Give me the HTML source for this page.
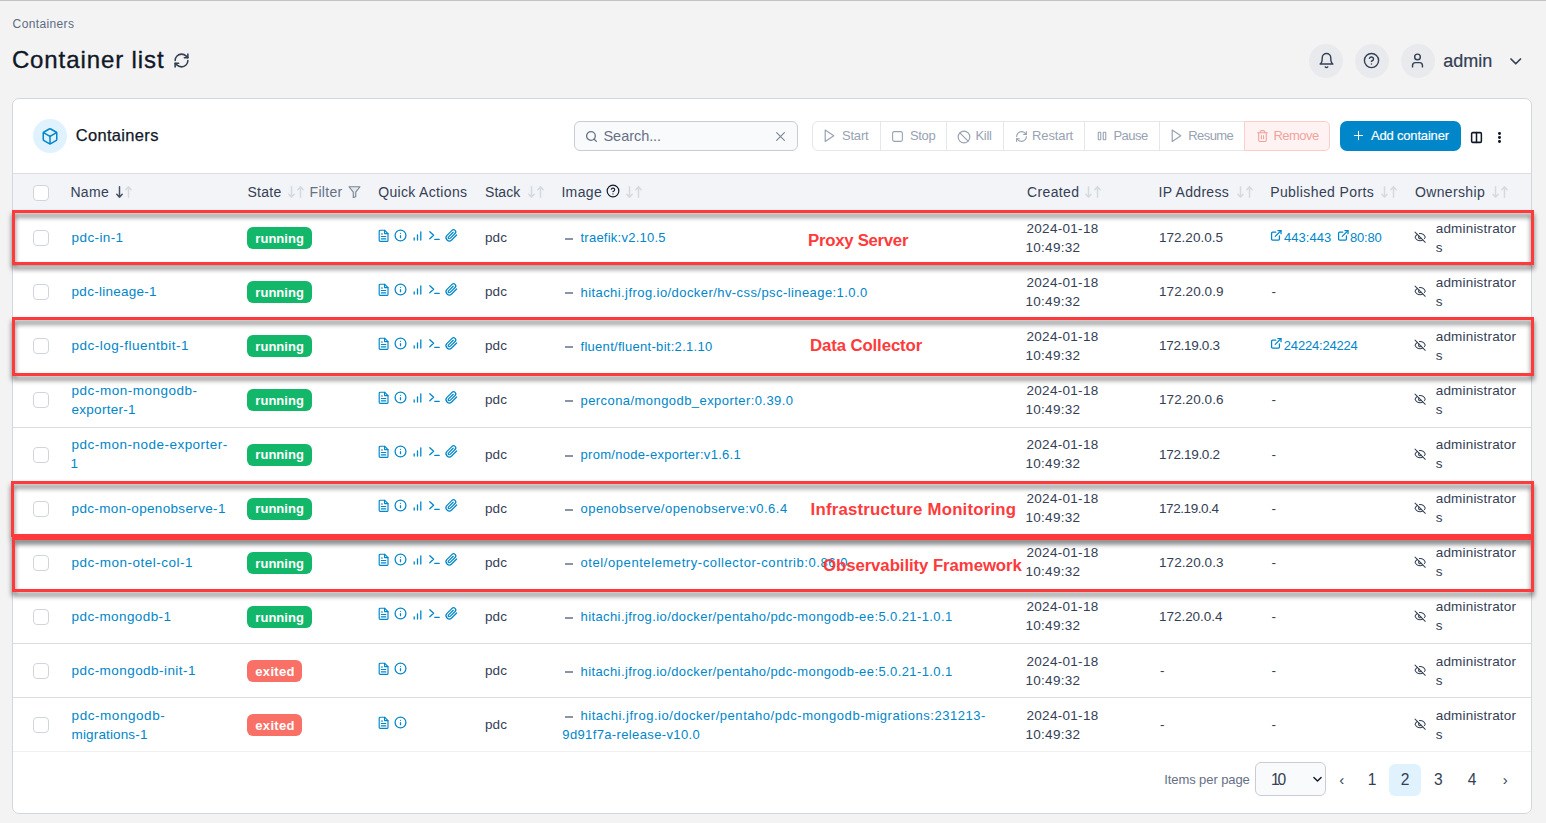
<!DOCTYPE html><html><head><meta charset="utf-8"><style>
html,body{margin:0;padding:0;}
body{width:1546px;height:823px;overflow:hidden;background:#f3f3f3;position:relative;font-family:"Liberation Sans",sans-serif;}
.a{position:absolute;box-sizing:border-box;}
.t{position:absolute;white-space:nowrap;}
svg.a{overflow:visible;}
</style></head><body>
<div class="a" style="left:0px;top:0px;width:1546px;height:1px;background:#c4c4c4;"></div>
<div class="t " style="left:12.60px;top:17.84px;font-size:12px;line-height:12px;color:#5d6b82;letter-spacing:0.374px;">Containers</div>
<div class="t " style="left:11.90px;top:48.28px;font-size:24px;line-height:24px;color:#101828;letter-spacing:0.900px;-webkit-text-stroke:0.35px #101828;">Container list</div>
<svg class="a" style="left:173px;top:51.5px;" width="17" height="17" viewBox="0 0 24 24" fill="none" stroke="#344054" stroke-width="2.2" stroke-linecap="round" stroke-linejoin="round"><path d="M3 12a9 9 0 0 1 9-9 9.75 9.75 0 0 1 6.74 2.74L21 8"/><path d="M21 3v5h-5"/><path d="M21 12a9 9 0 0 1-9 9 9.75 9.75 0 0 1-6.74-2.74L3 16"/><path d="M8 16H3v5"/></svg>
<div class="a" style="left:1309px;top:44px;width:34px;height:34px;border-radius:50%;background:#e8eaee;"></div>
<div class="a" style="left:1355px;top:44px;width:34px;height:34px;border-radius:50%;background:#e8eaee;"></div>
<div class="a" style="left:1401px;top:44px;width:34px;height:34px;border-radius:50%;background:#e8eaee;"></div>
<svg class="a" style="left:1317.5px;top:52px;" width="17" height="17" viewBox="0 0 24 24" fill="none" stroke="#344054" stroke-width="2" stroke-linecap="round" stroke-linejoin="round"><path d="M6 8a6 6 0 0 1 12 0c0 7 3 9 3 9H3s3-2 3-9"/><path d="M10.3 21a1.94 1.94 0 0 0 3.4 0"/></svg>
<svg class="a" style="left:1363px;top:52px;" width="17" height="17" viewBox="0 0 24 24" fill="none" stroke="#344054" stroke-width="2" stroke-linecap="round" stroke-linejoin="round"><circle cx="12" cy="12" r="10"/><path d="M9.09 9a3 3 0 0 1 5.83 1c0 2-3 3-3 3"/><path d="M12 17h.01"/></svg>
<svg class="a" style="left:1409px;top:51.7px;" width="17" height="17" viewBox="0 0 24 24" fill="none" stroke="#344054" stroke-width="2" stroke-linecap="round" stroke-linejoin="round"><path d="M19 21v-2a4 4 0 0 0-4-4H9a4 4 0 0 0-4 4v2"/><circle cx="12" cy="7" r="4"/></svg>
<div class="t " style="left:1443.20px;top:51.76px;font-size:18px;line-height:18px;color:#344054;letter-spacing:-0.004px;-webkit-text-stroke:0.2px #344054;">admin</div>
<svg class="a" style="left:1509.5px;top:57.5px;" width="11.5" height="7.5" viewBox="0 0 11.5 7.5" fill="none" stroke="#344054" stroke-width="1.7" stroke-linecap="round" stroke-linejoin="round"><path d="M1 1l4.75 4.75L10.5 1"/></svg>
<div class="a" style="left:12px;top:98px;width:1520px;height:716px;background:#fff;border:1px solid #d3d8df;border-radius:7px;"></div>
<div class="a" style="left:13px;top:173px;width:1518px;height:1px;background:#dedede;"></div>
<div class="a" style="left:33px;top:119px;width:34px;height:34px;border-radius:50%;background:#e0f2fe;"></div>
<svg class="a" style="left:41px;top:126.6px;" width="18" height="18.6" viewBox="0 0 24 24" fill="none" stroke="#0086c9" stroke-width="2" stroke-linecap="round" stroke-linejoin="round"><path d="M21 16V8a2 2 0 0 0-1-1.73l-7-4a2 2 0 0 0-2 0l-7 4A2 2 0 0 0 3 8v8a2 2 0 0 0 1 1.73l7 4a2 2 0 0 0 2 0l7-4A2 2 0 0 0 21 16z"/><path d="M3.3 7L12 12l8.7-5"/><path d="M12 22V12"/></svg>
<div class="t " style="left:75.70px;top:127.03px;font-size:16.5px;line-height:16.5px;color:#101828;letter-spacing:0.329px;-webkit-text-stroke:0.25px #101828;">Containers</div>
<div class="a" style="left:574px;top:121px;width:224px;height:30px;background:#f9fafb;border:1px solid #c9cdd3;border-radius:6px;"></div>
<svg class="a" style="left:584.7px;top:129.5px;" width="13" height="13" viewBox="0 0 24 24" fill="none" stroke="#667085" stroke-width="2.4" stroke-linecap="round" stroke-linejoin="round"><circle cx="11" cy="11" r="8"/><path d="M21 21l-4.35-4.35"/></svg>
<div class="t " style="left:603.50px;top:128.72px;font-size:14.5px;line-height:14.5px;color:#667085;letter-spacing:-0.050px;">Search...</div>
<svg class="a" style="left:775.5px;top:131.5px;" width="9" height="9" viewBox="0 0 9 9" fill="none" stroke="#7a8494" stroke-width="1.1" stroke-linecap="round" stroke-linejoin="round"><path d="M0.6 0.6l7.8 7.8M8.4 0.6L0.6 8.4"/></svg>
<div class="a" style="left:812px;top:121px;width:433px;height:30px;border:1px solid #e4e7ec;border-radius:6px 0 0 6px;background:#fff;"></div>
<div class="a" style="left:880px;top:121px;width:1px;height:30px;background:#e4e7ec;"></div>
<div class="a" style="left:946px;top:121px;width:1px;height:30px;background:#e4e7ec;"></div>
<div class="a" style="left:1003px;top:121px;width:1px;height:30px;background:#e4e7ec;"></div>
<div class="a" style="left:1084px;top:121px;width:1px;height:30px;background:#e4e7ec;"></div>
<div class="a" style="left:1159px;top:121px;width:1px;height:30px;background:#e4e7ec;"></div>
<div class="a" style="left:1244px;top:121px;width:86px;height:30px;background:#fef3f2;border:1px solid #fecdca;border-radius:0 5px 5px 0;"></div>
<svg class="a" style="left:824.4px;top:129.4px;" width="11" height="13.4" viewBox="0 0 11 13.4" fill="none" stroke="#98a2b3" stroke-width="1.2" stroke-linecap="round" stroke-linejoin="round"><path d="M1.2 1l8.6 5.7-8.6 5.7z"/></svg>
<div class="t " style="left:841.90px;top:128.99px;font-size:13px;line-height:13px;color:#98a2b3;letter-spacing:-0.160px;">Start</div>
<svg class="a" style="left:891px;top:129.5px;" width="13" height="13" viewBox="0 0 24 24" fill="none" stroke="#98a2b3" stroke-width="2" stroke-linecap="round" stroke-linejoin="round"><rect x="3" y="3" width="18" height="18" rx="3"/></svg>
<div class="t " style="left:910.00px;top:128.99px;font-size:13px;line-height:13px;color:#98a2b3;letter-spacing:-0.338px;">Stop</div>
<svg class="a" style="left:956.5px;top:129.5px;" width="14" height="14" viewBox="0 0 24 24" fill="none" stroke="#98a2b3" stroke-width="2" stroke-linecap="round" stroke-linejoin="round"><circle cx="12" cy="12" r="10"/><path d="M4.9 4.9l14.2 14.2"/></svg>
<div class="t " style="left:975.40px;top:128.99px;font-size:13px;line-height:13px;color:#98a2b3;letter-spacing:-0.282px;">Kill</div>
<svg class="a" style="left:1014.5px;top:129.5px;" width="13" height="13" viewBox="0 0 24 24" fill="none" stroke="#98a2b3" stroke-width="2" stroke-linecap="round" stroke-linejoin="round"><path d="M3 12a9 9 0 0 1 9-9 9.75 9.75 0 0 1 6.74 2.74L21 8"/><path d="M21 3v5h-5"/><path d="M21 12a9 9 0 0 1-9 9 9.75 9.75 0 0 1-6.74-2.74L3 16"/><path d="M8 16H3v5"/></svg>
<div class="t " style="left:1032.00px;top:128.99px;font-size:13px;line-height:13px;color:#98a2b3;letter-spacing:-0.115px;">Restart</div>
<svg class="a" style="left:1097px;top:130px;" width="10" height="12" viewBox="0 0 24 24" fill="none" stroke="#98a2b3" stroke-width="2.6" stroke-linecap="round" stroke-linejoin="round"><rect x="3" y="3" width="6" height="18" rx="1"/><rect x="15" y="3" width="6" height="18" rx="1"/></svg>
<div class="t " style="left:1113.40px;top:128.99px;font-size:13px;line-height:13px;color:#98a2b3;letter-spacing:-0.508px;">Pause</div>
<svg class="a" style="left:1171.4px;top:129.4px;" width="11" height="13.4" viewBox="0 0 11 13.4" fill="none" stroke="#98a2b3" stroke-width="1.2" stroke-linecap="round" stroke-linejoin="round"><path d="M1.2 1l8.6 5.7-8.6 5.7z"/></svg>
<div class="t " style="left:1188.30px;top:128.99px;font-size:13px;line-height:13px;color:#98a2b3;letter-spacing:-0.595px;">Resume</div>
<svg class="a" style="left:1255.5px;top:129px;" width="13" height="14" viewBox="0 0 24 24" fill="none" stroke="#f0a39d" stroke-width="2" stroke-linecap="round" stroke-linejoin="round"><path d="M3 6h18"/><path d="M19 6v14a2 2 0 0 1-2 2H7a2 2 0 0 1-2-2V6"/><path d="M8 6V4a2 2 0 0 1 2-2h4a2 2 0 0 1 2 2v2"/><path d="M10 11v6M14 11v6"/></svg>
<div class="t " style="left:1273.50px;top:128.99px;font-size:13px;line-height:13px;color:#f0a39d;letter-spacing:-0.555px;">Remove</div>
<div class="a" style="left:1340px;top:121px;width:121px;height:30px;background:#0086c9;border-radius:7px;"></div>
<svg class="a" style="left:1352.5px;top:130px;" width="11" height="11" viewBox="0 0 24 24" fill="none" stroke="#fff" stroke-width="2.2" stroke-linecap="round" stroke-linejoin="round"><path d="M12 3v18M3 12h18"/></svg>
<div class="t " style="left:1371.00px;top:128.99px;font-size:13px;line-height:13px;color:#fff;letter-spacing:-0.183px;-webkit-text-stroke:0.15px #fff;">Add container</div>
<svg class="a" style="left:1469.5px;top:131px;" width="13" height="13" viewBox="0 0 24 24" fill="none" stroke="#101828" stroke-width="2.8" stroke-linecap="round" stroke-linejoin="round"><rect x="3" y="3" width="18" height="18" rx="2"/><path d="M12 3v18"/></svg>
<div class="a" style="left:1498.2px;top:131.79999999999998px;width:2.8px;height:2.8px;border-radius:50%;background:#101828;"></div>
<div class="a" style="left:1498.2px;top:136.0px;width:2.8px;height:2.8px;border-radius:50%;background:#101828;"></div>
<div class="a" style="left:1498.2px;top:140.2px;width:2.8px;height:2.8px;border-radius:50%;background:#101828;"></div>
<div class="a" style="left:13px;top:174px;width:1518px;height:37px;background:#f2f4f7;"></div>
<div class="a" style="left:13px;top:211px;width:1518px;height:1px;background:#dedede;"></div>
<div class="a" style="left:33px;top:185px;width:16px;height:16px;border:1px solid #d0d5dd;border-radius:4px;background:#fff;"></div>
<div class="t " style="left:70.40px;top:185.15px;font-size:14px;line-height:14px;color:#344054;letter-spacing:0.347px;">Name</div>
<svg class="a" style="left:116px;top:186px;" width="7" height="12" viewBox="0 0 7 12" fill="none" stroke="#475467" stroke-width="1.5" stroke-linecap="round" stroke-linejoin="round"><path d="M3.5 0.8v10.4M0.8 8.3l2.7 2.9 2.7-2.9"/></svg>
<svg class="a" style="left:125px;top:186px;" width="7" height="12" viewBox="0 0 7 12" fill="none" stroke="#d5d9e0" stroke-width="1.5" stroke-linecap="round" stroke-linejoin="round"><path d="M3.5 11.2V0.8M0.8 3.7l2.7-2.9 2.7 2.9"/></svg>
<div class="t " style="left:247.40px;top:185.15px;font-size:14px;line-height:14px;color:#344054;letter-spacing:0.299px;">State</div>
<svg class="a" style="left:288.3px;top:186px;" width="7" height="12" viewBox="0 0 7 12" fill="none" stroke="#d5d9e0" stroke-width="1.5" stroke-linecap="round" stroke-linejoin="round"><path d="M3.5 0.8v10.4M0.8 8.3l2.7 2.9 2.7-2.9"/></svg>
<svg class="a" style="left:297.3px;top:186px;" width="7" height="12" viewBox="0 0 7 12" fill="none" stroke="#d5d9e0" stroke-width="1.5" stroke-linecap="round" stroke-linejoin="round"><path d="M3.5 11.2V0.8M0.8 3.7l2.7-2.9 2.7 2.9"/></svg>
<div class="t " style="left:309.50px;top:185.15px;font-size:14px;line-height:14px;color:#667085;letter-spacing:0.330px;">Filter</div>
<svg class="a" style="left:347.5px;top:186px;" width="13" height="12" viewBox="0 0 13 12.5" fill="none" stroke="#7a8494" stroke-width="1.15" stroke-linecap="round" stroke-linejoin="round"><path d="M0.8 0.8h11.4L7.8 6.3v4.9L5.2 12V6.3z" fill="#e4e7ec"/></svg>
<div class="t " style="left:378.20px;top:185.15px;font-size:14px;line-height:14px;color:#344054;letter-spacing:0.335px;">Quick Actions</div>
<div class="t " style="left:485.00px;top:185.15px;font-size:14px;line-height:14px;color:#344054;letter-spacing:0.072px;">Stack</div>
<svg class="a" style="left:527.6px;top:186px;" width="7" height="12" viewBox="0 0 7 12" fill="none" stroke="#d5d9e0" stroke-width="1.5" stroke-linecap="round" stroke-linejoin="round"><path d="M3.5 0.8v10.4M0.8 8.3l2.7 2.9 2.7-2.9"/></svg>
<svg class="a" style="left:536.6px;top:186px;" width="7" height="12" viewBox="0 0 7 12" fill="none" stroke="#d5d9e0" stroke-width="1.5" stroke-linecap="round" stroke-linejoin="round"><path d="M3.5 11.2V0.8M0.8 3.7l2.7-2.9 2.7 2.9"/></svg>
<div class="t " style="left:561.40px;top:185.15px;font-size:14px;line-height:14px;color:#344054;letter-spacing:0.344px;">Image</div>
<svg class="a" style="left:605.5px;top:183.5px;" width="14" height="14" viewBox="0 0 24 24" fill="none" stroke="#101828" stroke-width="2" stroke-linecap="round" stroke-linejoin="round"><circle cx="12" cy="12" r="10"/><path d="M9.09 9a3 3 0 0 1 5.83 1c0 2-3 3-3 3"/><path d="M12 17h.01"/></svg>
<svg class="a" style="left:626.3px;top:186px;" width="7" height="12" viewBox="0 0 7 12" fill="none" stroke="#d5d9e0" stroke-width="1.5" stroke-linecap="round" stroke-linejoin="round"><path d="M3.5 0.8v10.4M0.8 8.3l2.7 2.9 2.7-2.9"/></svg>
<svg class="a" style="left:635.3px;top:186px;" width="7" height="12" viewBox="0 0 7 12" fill="none" stroke="#d5d9e0" stroke-width="1.5" stroke-linecap="round" stroke-linejoin="round"><path d="M3.5 11.2V0.8M0.8 3.7l2.7-2.9 2.7 2.9"/></svg>
<div class="t " style="left:1026.90px;top:185.15px;font-size:14px;line-height:14px;color:#344054;letter-spacing:0.397px;">Created</div>
<svg class="a" style="left:1085.2px;top:186px;" width="7" height="12" viewBox="0 0 7 12" fill="none" stroke="#d5d9e0" stroke-width="1.5" stroke-linecap="round" stroke-linejoin="round"><path d="M3.5 0.8v10.4M0.8 8.3l2.7 2.9 2.7-2.9"/></svg>
<svg class="a" style="left:1094.2px;top:186px;" width="7" height="12" viewBox="0 0 7 12" fill="none" stroke="#d5d9e0" stroke-width="1.5" stroke-linecap="round" stroke-linejoin="round"><path d="M3.5 11.2V0.8M0.8 3.7l2.7-2.9 2.7 2.9"/></svg>
<div class="t " style="left:1158.50px;top:185.15px;font-size:14px;line-height:14px;color:#344054;letter-spacing:0.314px;">IP Address</div>
<svg class="a" style="left:1236.5px;top:186px;" width="7" height="12" viewBox="0 0 7 12" fill="none" stroke="#d5d9e0" stroke-width="1.5" stroke-linecap="round" stroke-linejoin="round"><path d="M3.5 0.8v10.4M0.8 8.3l2.7 2.9 2.7-2.9"/></svg>
<svg class="a" style="left:1245.5px;top:186px;" width="7" height="12" viewBox="0 0 7 12" fill="none" stroke="#d5d9e0" stroke-width="1.5" stroke-linecap="round" stroke-linejoin="round"><path d="M3.5 11.2V0.8M0.8 3.7l2.7-2.9 2.7 2.9"/></svg>
<div class="t " style="left:1270.20px;top:185.15px;font-size:14px;line-height:14px;color:#344054;letter-spacing:0.396px;">Published Ports</div>
<svg class="a" style="left:1380.5px;top:186px;" width="7" height="12" viewBox="0 0 7 12" fill="none" stroke="#d5d9e0" stroke-width="1.5" stroke-linecap="round" stroke-linejoin="round"><path d="M3.5 0.8v10.4M0.8 8.3l2.7 2.9 2.7-2.9"/></svg>
<svg class="a" style="left:1389.5px;top:186px;" width="7" height="12" viewBox="0 0 7 12" fill="none" stroke="#d5d9e0" stroke-width="1.5" stroke-linecap="round" stroke-linejoin="round"><path d="M3.5 11.2V0.8M0.8 3.7l2.7-2.9 2.7 2.9"/></svg>
<div class="t " style="left:1414.90px;top:185.15px;font-size:14px;line-height:14px;color:#344054;letter-spacing:0.371px;">Ownership</div>
<svg class="a" style="left:1491.5px;top:186px;" width="7" height="12" viewBox="0 0 7 12" fill="none" stroke="#d5d9e0" stroke-width="1.5" stroke-linecap="round" stroke-linejoin="round"><path d="M3.5 0.8v10.4M0.8 8.3l2.7 2.9 2.7-2.9"/></svg>
<svg class="a" style="left:1500.5px;top:186px;" width="7" height="12" viewBox="0 0 7 12" fill="none" stroke="#d5d9e0" stroke-width="1.5" stroke-linecap="round" stroke-linejoin="round"><path d="M3.5 11.2V0.8M0.8 3.7l2.7-2.9 2.7 2.9"/></svg>
<div class="a" style="left:33px;top:230.0px;width:16px;height:16px;border:1px solid #d0d5dd;border-radius:4px;background:#fff;"></div>
<div class="t " style="left:71.60px;top:231.07px;font-size:13.5px;line-height:13.5px;color:#0086c9;letter-spacing:0.391px;">pdc-in-1</div>
<div class="a" style="left:247px;top:227.0px;width:65px;height:22px;background:#12b76a;border-radius:6px;"></div>
<div class="t " style="left:255.30px;top:231.79px;font-size:13px;line-height:13px;color:#fff;font-weight:700;letter-spacing:0.044px;">running</div>
<svg class="a" style="left:378px;top:228.5px;" width="11" height="14" viewBox="0 0 11 14" fill="none" stroke="#0086c9" stroke-width="1.15" stroke-linecap="round" stroke-linejoin="round"><path d="M2.2 1.2H6.6L10 4.6V11.4a1 1 0 0 1-1 1H2.2a1 1 0 0 1-1-1V2.2a1 1 0 0 1 1-1z"/><path d="M6.6 1.2v3.4H10"/><path d="M3.3 5h1.2M3.3 7.5h4.5M3.3 9.9h4.5"/></svg>
<svg class="a" style="left:394px;top:228.5px;" width="13" height="13" viewBox="0 0 24 24" fill="none" stroke="#0086c9" stroke-width="2.3" stroke-linecap="round" stroke-linejoin="round"><circle cx="12" cy="12" r="10"/><path d="M12 16v-4M12 8h.01"/></svg>
<svg class="a" style="left:413px;top:230.6px;" width="9" height="10" viewBox="0 0 9 10" fill="none" stroke="#0086c9" stroke-width="1.3" stroke-linecap="round" stroke-linejoin="round"><path d="M1.2 9v-2.2M4.5 9V3.8M7.8 9V0.8"/></svg>
<svg class="a" style="left:429px;top:230.5px;" width="11" height="9" viewBox="0 0 11 9" fill="none" stroke="#0086c9" stroke-width="1.3" stroke-linecap="round" stroke-linejoin="round"><path d="M0.8 0.8l3.8 3.5-3.8 3.5M5.8 8.4h4.4"/></svg>
<svg class="a" style="left:444.5px;top:228.5px;" width="13" height="13" viewBox="0 0 24 24" fill="none" stroke="#0086c9" stroke-width="2.3" stroke-linecap="round" stroke-linejoin="round"><path d="M21.44 11.05l-9.19 9.19a6 6 0 0 1-8.49-8.49l9.19-9.19a4 4 0 0 1 5.66 5.66l-9.2 9.19a2 2 0 0 1-2.83-2.83l8.49-8.48"/></svg>
<div class="t " style="left:484.90px;top:231.07px;font-size:13.5px;line-height:13.5px;color:#344054;letter-spacing:0.192px;">pdc</div>
<div class="a" style="left:565px;top:238.0px;width:8px;height:2px;background:#8a94a6;"></div>
<div class="t " style="left:580.50px;top:231.49px;font-size:13px;line-height:13px;color:#0086c9;letter-spacing:0.241px;">traefik:v2.10.5</div>
<div class="t " style="left:1026.50px;top:221.57px;font-size:13.5px;line-height:13.5px;color:#344054;letter-spacing:0.295px;">2024-01-18</div>
<div class="t " style="left:1025.50px;top:240.57px;font-size:13.5px;line-height:13.5px;color:#344054;letter-spacing:0.280px;">10:49:32</div>
<div class="t " style="left:1159.00px;top:231.07px;font-size:13.5px;line-height:13.5px;color:#344054;letter-spacing:0.022px;">172.20.0.5</div>
<svg class="a" style="left:1269.6px;top:229.2px;" width="12.6" height="12.6" viewBox="0 0 24 24" fill="none" stroke="#0086c9" stroke-width="2.4" stroke-linecap="round" stroke-linejoin="round"><path d="M18 13v6a2 2 0 0 1-2 2H5a2 2 0 0 1-2-2V8a2 2 0 0 1 2-2h6"/><path d="M15 3h6v6"/><path d="M10 14L21 3"/></svg>
<div class="t " style="left:1284.00px;top:230.69px;font-size:13px;line-height:13px;color:#0086c9;letter-spacing:0.056px;">443:443</div>
<svg class="a" style="left:1336.7px;top:229.2px;" width="12.6" height="12.6" viewBox="0 0 24 24" fill="none" stroke="#0086c9" stroke-width="2.4" stroke-linecap="round" stroke-linejoin="round"><path d="M18 13v6a2 2 0 0 1-2 2H5a2 2 0 0 1-2-2V8a2 2 0 0 1 2-2h6"/><path d="M15 3h6v6"/><path d="M10 14L21 3"/></svg>
<div class="t " style="left:1350.10px;top:230.69px;font-size:13px;line-height:13px;color:#0086c9;letter-spacing:-0.250px;">80:80</div>
<svg class="a" style="left:1414px;top:231.0px;" width="12.3" height="12.3" viewBox="0 0 24 24" fill="none" stroke="#344054" stroke-width="2" stroke-linecap="round" stroke-linejoin="round"><path d="M9.88 9.88a3 3 0 1 0 4.24 4.24"/><path d="M10.73 5.08A10.43 10.43 0 0 1 12 5c7 0 10 7 10 7a13.16 13.16 0 0 1-1.67 2.68"/><path d="M6.61 6.61A13.53 13.53 0 0 0 2 12s3 7 10 7a9.74 9.74 0 0 0 5.39-1.61"/><path d="M2 2l20 20"/></svg>
<div class="t " style="left:1435.70px;top:221.57px;font-size:13.5px;line-height:13.5px;color:#344054;letter-spacing:0.189px;">administrator</div>
<div class="t " style="left:1435.70px;top:240.57px;font-size:13.5px;line-height:13.5px;color:#344054;">s</div>
<div class="a" style="left:13px;top:265px;width:1518px;height:1px;background:#dcdcdc;"></div>
<div class="a" style="left:33px;top:284.13px;width:16px;height:16px;border:1px solid #d0d5dd;border-radius:4px;background:#fff;"></div>
<div class="t " style="left:71.60px;top:285.20px;font-size:13.5px;line-height:13.5px;color:#0086c9;letter-spacing:0.259px;">pdc-lineage-1</div>
<div class="a" style="left:247px;top:281.13px;width:65px;height:22px;background:#12b76a;border-radius:6px;"></div>
<div class="t " style="left:255.30px;top:285.92px;font-size:13px;line-height:13px;color:#fff;font-weight:700;letter-spacing:0.044px;">running</div>
<svg class="a" style="left:378px;top:282.63px;" width="11" height="14" viewBox="0 0 11 14" fill="none" stroke="#0086c9" stroke-width="1.15" stroke-linecap="round" stroke-linejoin="round"><path d="M2.2 1.2H6.6L10 4.6V11.4a1 1 0 0 1-1 1H2.2a1 1 0 0 1-1-1V2.2a1 1 0 0 1 1-1z"/><path d="M6.6 1.2v3.4H10"/><path d="M3.3 5h1.2M3.3 7.5h4.5M3.3 9.9h4.5"/></svg>
<svg class="a" style="left:394px;top:282.63px;" width="13" height="13" viewBox="0 0 24 24" fill="none" stroke="#0086c9" stroke-width="2.3" stroke-linecap="round" stroke-linejoin="round"><circle cx="12" cy="12" r="10"/><path d="M12 16v-4M12 8h.01"/></svg>
<svg class="a" style="left:413px;top:284.73px;" width="9" height="10" viewBox="0 0 9 10" fill="none" stroke="#0086c9" stroke-width="1.3" stroke-linecap="round" stroke-linejoin="round"><path d="M1.2 9v-2.2M4.5 9V3.8M7.8 9V0.8"/></svg>
<svg class="a" style="left:429px;top:284.63px;" width="11" height="9" viewBox="0 0 11 9" fill="none" stroke="#0086c9" stroke-width="1.3" stroke-linecap="round" stroke-linejoin="round"><path d="M0.8 0.8l3.8 3.5-3.8 3.5M5.8 8.4h4.4"/></svg>
<svg class="a" style="left:444.5px;top:282.63px;" width="13" height="13" viewBox="0 0 24 24" fill="none" stroke="#0086c9" stroke-width="2.3" stroke-linecap="round" stroke-linejoin="round"><path d="M21.44 11.05l-9.19 9.19a6 6 0 0 1-8.49-8.49l9.19-9.19a4 4 0 0 1 5.66 5.66l-9.2 9.19a2 2 0 0 1-2.83-2.83l8.49-8.48"/></svg>
<div class="t " style="left:484.90px;top:285.20px;font-size:13.5px;line-height:13.5px;color:#344054;letter-spacing:0.192px;">pdc</div>
<div class="a" style="left:565px;top:292.13px;width:8px;height:2px;background:#8a94a6;"></div>
<div class="t " style="left:580.50px;top:285.62px;font-size:13px;line-height:13px;color:#0086c9;letter-spacing:0.428px;">hitachi.jfrog.io/docker/hv-css/psc-lineage:1.0.0</div>
<div class="t " style="left:1026.50px;top:275.70px;font-size:13.5px;line-height:13.5px;color:#344054;letter-spacing:0.295px;">2024-01-18</div>
<div class="t " style="left:1025.50px;top:294.70px;font-size:13.5px;line-height:13.5px;color:#344054;letter-spacing:0.280px;">10:49:32</div>
<div class="t " style="left:1159.00px;top:285.20px;font-size:13.5px;line-height:13.5px;color:#344054;letter-spacing:0.078px;">172.20.0.9</div>
<div class="t " style="left:1271.40px;top:285.20px;font-size:13.5px;line-height:13.5px;color:#344054;">-</div>
<svg class="a" style="left:1414px;top:285.13px;" width="12.3" height="12.3" viewBox="0 0 24 24" fill="none" stroke="#344054" stroke-width="2" stroke-linecap="round" stroke-linejoin="round"><path d="M9.88 9.88a3 3 0 1 0 4.24 4.24"/><path d="M10.73 5.08A10.43 10.43 0 0 1 12 5c7 0 10 7 10 7a13.16 13.16 0 0 1-1.67 2.68"/><path d="M6.61 6.61A13.53 13.53 0 0 0 2 12s3 7 10 7a9.74 9.74 0 0 0 5.39-1.61"/><path d="M2 2l20 20"/></svg>
<div class="t " style="left:1435.70px;top:275.70px;font-size:13.5px;line-height:13.5px;color:#344054;letter-spacing:0.189px;">administrator</div>
<div class="t " style="left:1435.70px;top:294.70px;font-size:13.5px;line-height:13.5px;color:#344054;">s</div>
<div class="a" style="left:13px;top:319px;width:1518px;height:1px;background:#dcdcdc;"></div>
<div class="a" style="left:33px;top:338.26px;width:16px;height:16px;border:1px solid #d0d5dd;border-radius:4px;background:#fff;"></div>
<div class="t " style="left:71.60px;top:339.33px;font-size:13.5px;line-height:13.5px;color:#0086c9;letter-spacing:0.486px;">pdc-log-fluentbit-1</div>
<div class="a" style="left:247px;top:335.26px;width:65px;height:22px;background:#12b76a;border-radius:6px;"></div>
<div class="t " style="left:255.30px;top:340.05px;font-size:13px;line-height:13px;color:#fff;font-weight:700;letter-spacing:0.044px;">running</div>
<svg class="a" style="left:378px;top:336.76px;" width="11" height="14" viewBox="0 0 11 14" fill="none" stroke="#0086c9" stroke-width="1.15" stroke-linecap="round" stroke-linejoin="round"><path d="M2.2 1.2H6.6L10 4.6V11.4a1 1 0 0 1-1 1H2.2a1 1 0 0 1-1-1V2.2a1 1 0 0 1 1-1z"/><path d="M6.6 1.2v3.4H10"/><path d="M3.3 5h1.2M3.3 7.5h4.5M3.3 9.9h4.5"/></svg>
<svg class="a" style="left:394px;top:336.76px;" width="13" height="13" viewBox="0 0 24 24" fill="none" stroke="#0086c9" stroke-width="2.3" stroke-linecap="round" stroke-linejoin="round"><circle cx="12" cy="12" r="10"/><path d="M12 16v-4M12 8h.01"/></svg>
<svg class="a" style="left:413px;top:338.86px;" width="9" height="10" viewBox="0 0 9 10" fill="none" stroke="#0086c9" stroke-width="1.3" stroke-linecap="round" stroke-linejoin="round"><path d="M1.2 9v-2.2M4.5 9V3.8M7.8 9V0.8"/></svg>
<svg class="a" style="left:429px;top:338.76px;" width="11" height="9" viewBox="0 0 11 9" fill="none" stroke="#0086c9" stroke-width="1.3" stroke-linecap="round" stroke-linejoin="round"><path d="M0.8 0.8l3.8 3.5-3.8 3.5M5.8 8.4h4.4"/></svg>
<svg class="a" style="left:444.5px;top:336.76px;" width="13" height="13" viewBox="0 0 24 24" fill="none" stroke="#0086c9" stroke-width="2.3" stroke-linecap="round" stroke-linejoin="round"><path d="M21.44 11.05l-9.19 9.19a6 6 0 0 1-8.49-8.49l9.19-9.19a4 4 0 0 1 5.66 5.66l-9.2 9.19a2 2 0 0 1-2.83-2.83l8.49-8.48"/></svg>
<div class="t " style="left:484.90px;top:339.33px;font-size:13.5px;line-height:13.5px;color:#344054;letter-spacing:0.192px;">pdc</div>
<div class="a" style="left:565px;top:346.26px;width:8px;height:2px;background:#8a94a6;"></div>
<div class="t " style="left:580.50px;top:339.75px;font-size:13px;line-height:13px;color:#0086c9;letter-spacing:0.291px;">fluent/fluent-bit:2.1.10</div>
<div class="t " style="left:1026.50px;top:329.83px;font-size:13.5px;line-height:13.5px;color:#344054;letter-spacing:0.295px;">2024-01-18</div>
<div class="t " style="left:1025.50px;top:348.83px;font-size:13.5px;line-height:13.5px;color:#344054;letter-spacing:0.280px;">10:49:32</div>
<div class="t " style="left:1159.00px;top:339.33px;font-size:13.5px;line-height:13.5px;color:#344054;letter-spacing:-0.311px;">172.19.0.3</div>
<svg class="a" style="left:1269.6px;top:337.46px;" width="12.6" height="12.6" viewBox="0 0 24 24" fill="none" stroke="#0086c9" stroke-width="2.4" stroke-linecap="round" stroke-linejoin="round"><path d="M18 13v6a2 2 0 0 1-2 2H5a2 2 0 0 1-2-2V8a2 2 0 0 1 2-2h6"/><path d="M15 3h6v6"/><path d="M10 14L21 3"/></svg>
<div class="t " style="left:1283.80px;top:338.95px;font-size:13px;line-height:13px;color:#0086c9;letter-spacing:-0.188px;">24224:24224</div>
<svg class="a" style="left:1414px;top:339.26px;" width="12.3" height="12.3" viewBox="0 0 24 24" fill="none" stroke="#344054" stroke-width="2" stroke-linecap="round" stroke-linejoin="round"><path d="M9.88 9.88a3 3 0 1 0 4.24 4.24"/><path d="M10.73 5.08A10.43 10.43 0 0 1 12 5c7 0 10 7 10 7a13.16 13.16 0 0 1-1.67 2.68"/><path d="M6.61 6.61A13.53 13.53 0 0 0 2 12s3 7 10 7a9.74 9.74 0 0 0 5.39-1.61"/><path d="M2 2l20 20"/></svg>
<div class="t " style="left:1435.70px;top:329.83px;font-size:13.5px;line-height:13.5px;color:#344054;letter-spacing:0.189px;">administrator</div>
<div class="t " style="left:1435.70px;top:348.83px;font-size:13.5px;line-height:13.5px;color:#344054;">s</div>
<div class="a" style="left:13px;top:373px;width:1518px;height:1px;background:#dcdcdc;"></div>
<div class="a" style="left:33px;top:392.39px;width:16px;height:16px;border:1px solid #d0d5dd;border-radius:4px;background:#fff;"></div>
<div class="t " style="left:71.60px;top:383.96px;font-size:13.5px;line-height:13.5px;color:#0086c9;letter-spacing:0.506px;">pdc-mon-mongodb-</div>
<div class="t " style="left:71.60px;top:402.96px;font-size:13.5px;line-height:13.5px;color:#0086c9;letter-spacing:0.253px;">exporter-1</div>
<div class="a" style="left:247px;top:389.39px;width:65px;height:22px;background:#12b76a;border-radius:6px;"></div>
<div class="t " style="left:255.30px;top:394.18px;font-size:13px;line-height:13px;color:#fff;font-weight:700;letter-spacing:0.044px;">running</div>
<svg class="a" style="left:378px;top:390.89px;" width="11" height="14" viewBox="0 0 11 14" fill="none" stroke="#0086c9" stroke-width="1.15" stroke-linecap="round" stroke-linejoin="round"><path d="M2.2 1.2H6.6L10 4.6V11.4a1 1 0 0 1-1 1H2.2a1 1 0 0 1-1-1V2.2a1 1 0 0 1 1-1z"/><path d="M6.6 1.2v3.4H10"/><path d="M3.3 5h1.2M3.3 7.5h4.5M3.3 9.9h4.5"/></svg>
<svg class="a" style="left:394px;top:390.89px;" width="13" height="13" viewBox="0 0 24 24" fill="none" stroke="#0086c9" stroke-width="2.3" stroke-linecap="round" stroke-linejoin="round"><circle cx="12" cy="12" r="10"/><path d="M12 16v-4M12 8h.01"/></svg>
<svg class="a" style="left:413px;top:392.99px;" width="9" height="10" viewBox="0 0 9 10" fill="none" stroke="#0086c9" stroke-width="1.3" stroke-linecap="round" stroke-linejoin="round"><path d="M1.2 9v-2.2M4.5 9V3.8M7.8 9V0.8"/></svg>
<svg class="a" style="left:429px;top:392.89px;" width="11" height="9" viewBox="0 0 11 9" fill="none" stroke="#0086c9" stroke-width="1.3" stroke-linecap="round" stroke-linejoin="round"><path d="M0.8 0.8l3.8 3.5-3.8 3.5M5.8 8.4h4.4"/></svg>
<svg class="a" style="left:444.5px;top:390.89px;" width="13" height="13" viewBox="0 0 24 24" fill="none" stroke="#0086c9" stroke-width="2.3" stroke-linecap="round" stroke-linejoin="round"><path d="M21.44 11.05l-9.19 9.19a6 6 0 0 1-8.49-8.49l9.19-9.19a4 4 0 0 1 5.66 5.66l-9.2 9.19a2 2 0 0 1-2.83-2.83l8.49-8.48"/></svg>
<div class="t " style="left:484.90px;top:393.46px;font-size:13.5px;line-height:13.5px;color:#344054;letter-spacing:0.192px;">pdc</div>
<div class="a" style="left:565px;top:400.39px;width:8px;height:2px;background:#8a94a6;"></div>
<div class="t " style="left:580.50px;top:393.88px;font-size:13px;line-height:13px;color:#0086c9;letter-spacing:0.435px;">percona/mongodb_exporter:0.39.0</div>
<div class="t " style="left:1026.50px;top:383.96px;font-size:13.5px;line-height:13.5px;color:#344054;letter-spacing:0.295px;">2024-01-18</div>
<div class="t " style="left:1025.50px;top:402.96px;font-size:13.5px;line-height:13.5px;color:#344054;letter-spacing:0.280px;">10:49:32</div>
<div class="t " style="left:1159.00px;top:393.46px;font-size:13.5px;line-height:13.5px;color:#344054;letter-spacing:0.078px;">172.20.0.6</div>
<div class="t " style="left:1271.40px;top:393.46px;font-size:13.5px;line-height:13.5px;color:#344054;">-</div>
<svg class="a" style="left:1414px;top:393.39px;" width="12.3" height="12.3" viewBox="0 0 24 24" fill="none" stroke="#344054" stroke-width="2" stroke-linecap="round" stroke-linejoin="round"><path d="M9.88 9.88a3 3 0 1 0 4.24 4.24"/><path d="M10.73 5.08A10.43 10.43 0 0 1 12 5c7 0 10 7 10 7a13.16 13.16 0 0 1-1.67 2.68"/><path d="M6.61 6.61A13.53 13.53 0 0 0 2 12s3 7 10 7a9.74 9.74 0 0 0 5.39-1.61"/><path d="M2 2l20 20"/></svg>
<div class="t " style="left:1435.70px;top:383.96px;font-size:13.5px;line-height:13.5px;color:#344054;letter-spacing:0.189px;">administrator</div>
<div class="t " style="left:1435.70px;top:402.96px;font-size:13.5px;line-height:13.5px;color:#344054;">s</div>
<div class="a" style="left:13px;top:427px;width:1518px;height:1px;background:#dcdcdc;"></div>
<div class="a" style="left:33px;top:446.52px;width:16px;height:16px;border:1px solid #d0d5dd;border-radius:4px;background:#fff;"></div>
<div class="t " style="left:71.60px;top:438.09px;font-size:13.5px;line-height:13.5px;color:#0086c9;letter-spacing:0.482px;">pdc-mon-node-exporter-</div>
<div class="t " style="left:70.60px;top:457.09px;font-size:13.5px;line-height:13.5px;color:#0086c9;">1</div>
<div class="a" style="left:247px;top:443.52px;width:65px;height:22px;background:#12b76a;border-radius:6px;"></div>
<div class="t " style="left:255.30px;top:448.31px;font-size:13px;line-height:13px;color:#fff;font-weight:700;letter-spacing:0.044px;">running</div>
<svg class="a" style="left:378px;top:445.02px;" width="11" height="14" viewBox="0 0 11 14" fill="none" stroke="#0086c9" stroke-width="1.15" stroke-linecap="round" stroke-linejoin="round"><path d="M2.2 1.2H6.6L10 4.6V11.4a1 1 0 0 1-1 1H2.2a1 1 0 0 1-1-1V2.2a1 1 0 0 1 1-1z"/><path d="M6.6 1.2v3.4H10"/><path d="M3.3 5h1.2M3.3 7.5h4.5M3.3 9.9h4.5"/></svg>
<svg class="a" style="left:394px;top:445.02px;" width="13" height="13" viewBox="0 0 24 24" fill="none" stroke="#0086c9" stroke-width="2.3" stroke-linecap="round" stroke-linejoin="round"><circle cx="12" cy="12" r="10"/><path d="M12 16v-4M12 8h.01"/></svg>
<svg class="a" style="left:413px;top:447.12px;" width="9" height="10" viewBox="0 0 9 10" fill="none" stroke="#0086c9" stroke-width="1.3" stroke-linecap="round" stroke-linejoin="round"><path d="M1.2 9v-2.2M4.5 9V3.8M7.8 9V0.8"/></svg>
<svg class="a" style="left:429px;top:447.02px;" width="11" height="9" viewBox="0 0 11 9" fill="none" stroke="#0086c9" stroke-width="1.3" stroke-linecap="round" stroke-linejoin="round"><path d="M0.8 0.8l3.8 3.5-3.8 3.5M5.8 8.4h4.4"/></svg>
<svg class="a" style="left:444.5px;top:445.02px;" width="13" height="13" viewBox="0 0 24 24" fill="none" stroke="#0086c9" stroke-width="2.3" stroke-linecap="round" stroke-linejoin="round"><path d="M21.44 11.05l-9.19 9.19a6 6 0 0 1-8.49-8.49l9.19-9.19a4 4 0 0 1 5.66 5.66l-9.2 9.19a2 2 0 0 1-2.83-2.83l8.49-8.48"/></svg>
<div class="t " style="left:484.90px;top:447.59px;font-size:13.5px;line-height:13.5px;color:#344054;letter-spacing:0.192px;">pdc</div>
<div class="a" style="left:565px;top:454.52px;width:8px;height:2px;background:#8a94a6;"></div>
<div class="t " style="left:580.50px;top:448.01px;font-size:13px;line-height:13px;color:#0086c9;letter-spacing:0.293px;">prom/node-exporter:v1.6.1</div>
<div class="t " style="left:1026.50px;top:438.09px;font-size:13.5px;line-height:13.5px;color:#344054;letter-spacing:0.295px;">2024-01-18</div>
<div class="t " style="left:1025.50px;top:457.09px;font-size:13.5px;line-height:13.5px;color:#344054;letter-spacing:0.280px;">10:49:32</div>
<div class="t " style="left:1159.00px;top:447.59px;font-size:13.5px;line-height:13.5px;color:#344054;letter-spacing:-0.311px;">172.19.0.2</div>
<div class="t " style="left:1271.40px;top:447.59px;font-size:13.5px;line-height:13.5px;color:#344054;">-</div>
<svg class="a" style="left:1414px;top:447.52px;" width="12.3" height="12.3" viewBox="0 0 24 24" fill="none" stroke="#344054" stroke-width="2" stroke-linecap="round" stroke-linejoin="round"><path d="M9.88 9.88a3 3 0 1 0 4.24 4.24"/><path d="M10.73 5.08A10.43 10.43 0 0 1 12 5c7 0 10 7 10 7a13.16 13.16 0 0 1-1.67 2.68"/><path d="M6.61 6.61A13.53 13.53 0 0 0 2 12s3 7 10 7a9.74 9.74 0 0 0 5.39-1.61"/><path d="M2 2l20 20"/></svg>
<div class="t " style="left:1435.70px;top:438.09px;font-size:13.5px;line-height:13.5px;color:#344054;letter-spacing:0.189px;">administrator</div>
<div class="t " style="left:1435.70px;top:457.09px;font-size:13.5px;line-height:13.5px;color:#344054;">s</div>
<div class="a" style="left:13px;top:481px;width:1518px;height:1px;background:#dcdcdc;"></div>
<div class="a" style="left:33px;top:500.65px;width:16px;height:16px;border:1px solid #d0d5dd;border-radius:4px;background:#fff;"></div>
<div class="t " style="left:71.60px;top:501.72px;font-size:13.5px;line-height:13.5px;color:#0086c9;letter-spacing:0.336px;">pdc-mon-openobserve-1</div>
<div class="a" style="left:247px;top:497.65px;width:65px;height:22px;background:#12b76a;border-radius:6px;"></div>
<div class="t " style="left:255.30px;top:502.44px;font-size:13px;line-height:13px;color:#fff;font-weight:700;letter-spacing:0.044px;">running</div>
<svg class="a" style="left:378px;top:499.15px;" width="11" height="14" viewBox="0 0 11 14" fill="none" stroke="#0086c9" stroke-width="1.15" stroke-linecap="round" stroke-linejoin="round"><path d="M2.2 1.2H6.6L10 4.6V11.4a1 1 0 0 1-1 1H2.2a1 1 0 0 1-1-1V2.2a1 1 0 0 1 1-1z"/><path d="M6.6 1.2v3.4H10"/><path d="M3.3 5h1.2M3.3 7.5h4.5M3.3 9.9h4.5"/></svg>
<svg class="a" style="left:394px;top:499.15px;" width="13" height="13" viewBox="0 0 24 24" fill="none" stroke="#0086c9" stroke-width="2.3" stroke-linecap="round" stroke-linejoin="round"><circle cx="12" cy="12" r="10"/><path d="M12 16v-4M12 8h.01"/></svg>
<svg class="a" style="left:413px;top:501.25px;" width="9" height="10" viewBox="0 0 9 10" fill="none" stroke="#0086c9" stroke-width="1.3" stroke-linecap="round" stroke-linejoin="round"><path d="M1.2 9v-2.2M4.5 9V3.8M7.8 9V0.8"/></svg>
<svg class="a" style="left:429px;top:501.15px;" width="11" height="9" viewBox="0 0 11 9" fill="none" stroke="#0086c9" stroke-width="1.3" stroke-linecap="round" stroke-linejoin="round"><path d="M0.8 0.8l3.8 3.5-3.8 3.5M5.8 8.4h4.4"/></svg>
<svg class="a" style="left:444.5px;top:499.15px;" width="13" height="13" viewBox="0 0 24 24" fill="none" stroke="#0086c9" stroke-width="2.3" stroke-linecap="round" stroke-linejoin="round"><path d="M21.44 11.05l-9.19 9.19a6 6 0 0 1-8.49-8.49l9.19-9.19a4 4 0 0 1 5.66 5.66l-9.2 9.19a2 2 0 0 1-2.83-2.83l8.49-8.48"/></svg>
<div class="t " style="left:484.90px;top:501.72px;font-size:13.5px;line-height:13.5px;color:#344054;letter-spacing:0.192px;">pdc</div>
<div class="a" style="left:565px;top:508.65px;width:8px;height:2px;background:#8a94a6;"></div>
<div class="t " style="left:580.50px;top:502.14px;font-size:13px;line-height:13px;color:#0086c9;letter-spacing:0.471px;">openobserve/openobserve:v0.6.4</div>
<div class="t " style="left:1026.50px;top:492.22px;font-size:13.5px;line-height:13.5px;color:#344054;letter-spacing:0.295px;">2024-01-18</div>
<div class="t " style="left:1025.50px;top:511.22px;font-size:13.5px;line-height:13.5px;color:#344054;letter-spacing:0.280px;">10:49:32</div>
<div class="t " style="left:1159.00px;top:501.72px;font-size:13.5px;line-height:13.5px;color:#344054;letter-spacing:-0.422px;">172.19.0.4</div>
<div class="t " style="left:1271.40px;top:501.72px;font-size:13.5px;line-height:13.5px;color:#344054;">-</div>
<svg class="a" style="left:1414px;top:501.65px;" width="12.3" height="12.3" viewBox="0 0 24 24" fill="none" stroke="#344054" stroke-width="2" stroke-linecap="round" stroke-linejoin="round"><path d="M9.88 9.88a3 3 0 1 0 4.24 4.24"/><path d="M10.73 5.08A10.43 10.43 0 0 1 12 5c7 0 10 7 10 7a13.16 13.16 0 0 1-1.67 2.68"/><path d="M6.61 6.61A13.53 13.53 0 0 0 2 12s3 7 10 7a9.74 9.74 0 0 0 5.39-1.61"/><path d="M2 2l20 20"/></svg>
<div class="t " style="left:1435.70px;top:492.22px;font-size:13.5px;line-height:13.5px;color:#344054;letter-spacing:0.189px;">administrator</div>
<div class="t " style="left:1435.70px;top:511.22px;font-size:13.5px;line-height:13.5px;color:#344054;">s</div>
<div class="a" style="left:13px;top:535px;width:1518px;height:1px;background:#dcdcdc;"></div>
<div class="a" style="left:33px;top:554.78px;width:16px;height:16px;border:1px solid #d0d5dd;border-radius:4px;background:#fff;"></div>
<div class="t " style="left:71.60px;top:555.85px;font-size:13.5px;line-height:13.5px;color:#0086c9;letter-spacing:0.492px;">pdc-mon-otel-col-1</div>
<div class="a" style="left:247px;top:551.78px;width:65px;height:22px;background:#12b76a;border-radius:6px;"></div>
<div class="t " style="left:255.30px;top:556.57px;font-size:13px;line-height:13px;color:#fff;font-weight:700;letter-spacing:0.044px;">running</div>
<svg class="a" style="left:378px;top:553.28px;" width="11" height="14" viewBox="0 0 11 14" fill="none" stroke="#0086c9" stroke-width="1.15" stroke-linecap="round" stroke-linejoin="round"><path d="M2.2 1.2H6.6L10 4.6V11.4a1 1 0 0 1-1 1H2.2a1 1 0 0 1-1-1V2.2a1 1 0 0 1 1-1z"/><path d="M6.6 1.2v3.4H10"/><path d="M3.3 5h1.2M3.3 7.5h4.5M3.3 9.9h4.5"/></svg>
<svg class="a" style="left:394px;top:553.28px;" width="13" height="13" viewBox="0 0 24 24" fill="none" stroke="#0086c9" stroke-width="2.3" stroke-linecap="round" stroke-linejoin="round"><circle cx="12" cy="12" r="10"/><path d="M12 16v-4M12 8h.01"/></svg>
<svg class="a" style="left:413px;top:555.38px;" width="9" height="10" viewBox="0 0 9 10" fill="none" stroke="#0086c9" stroke-width="1.3" stroke-linecap="round" stroke-linejoin="round"><path d="M1.2 9v-2.2M4.5 9V3.8M7.8 9V0.8"/></svg>
<svg class="a" style="left:429px;top:555.28px;" width="11" height="9" viewBox="0 0 11 9" fill="none" stroke="#0086c9" stroke-width="1.3" stroke-linecap="round" stroke-linejoin="round"><path d="M0.8 0.8l3.8 3.5-3.8 3.5M5.8 8.4h4.4"/></svg>
<svg class="a" style="left:444.5px;top:553.28px;" width="13" height="13" viewBox="0 0 24 24" fill="none" stroke="#0086c9" stroke-width="2.3" stroke-linecap="round" stroke-linejoin="round"><path d="M21.44 11.05l-9.19 9.19a6 6 0 0 1-8.49-8.49l9.19-9.19a4 4 0 0 1 5.66 5.66l-9.2 9.19a2 2 0 0 1-2.83-2.83l8.49-8.48"/></svg>
<div class="t " style="left:484.90px;top:555.85px;font-size:13.5px;line-height:13.5px;color:#344054;letter-spacing:0.192px;">pdc</div>
<div class="a" style="left:565px;top:562.78px;width:8px;height:2px;background:#8a94a6;"></div>
<div class="t " style="left:580.50px;top:556.27px;font-size:13px;line-height:13px;color:#0086c9;letter-spacing:0.577px;">otel/opentelemetry-collector-contrib:0.86.0</div>
<div class="t " style="left:1026.50px;top:546.35px;font-size:13.5px;line-height:13.5px;color:#344054;letter-spacing:0.295px;">2024-01-18</div>
<div class="t " style="left:1025.50px;top:565.35px;font-size:13.5px;line-height:13.5px;color:#344054;letter-spacing:0.280px;">10:49:32</div>
<div class="t " style="left:1159.00px;top:555.85px;font-size:13.5px;line-height:13.5px;color:#344054;letter-spacing:0.078px;">172.20.0.3</div>
<div class="t " style="left:1271.40px;top:555.85px;font-size:13.5px;line-height:13.5px;color:#344054;">-</div>
<svg class="a" style="left:1414px;top:555.78px;" width="12.3" height="12.3" viewBox="0 0 24 24" fill="none" stroke="#344054" stroke-width="2" stroke-linecap="round" stroke-linejoin="round"><path d="M9.88 9.88a3 3 0 1 0 4.24 4.24"/><path d="M10.73 5.08A10.43 10.43 0 0 1 12 5c7 0 10 7 10 7a13.16 13.16 0 0 1-1.67 2.68"/><path d="M6.61 6.61A13.53 13.53 0 0 0 2 12s3 7 10 7a9.74 9.74 0 0 0 5.39-1.61"/><path d="M2 2l20 20"/></svg>
<div class="t " style="left:1435.70px;top:546.35px;font-size:13.5px;line-height:13.5px;color:#344054;letter-spacing:0.189px;">administrator</div>
<div class="t " style="left:1435.70px;top:565.35px;font-size:13.5px;line-height:13.5px;color:#344054;">s</div>
<div class="a" style="left:13px;top:589px;width:1518px;height:1px;background:#dcdcdc;"></div>
<div class="a" style="left:33px;top:608.91px;width:16px;height:16px;border:1px solid #d0d5dd;border-radius:4px;background:#fff;"></div>
<div class="t " style="left:71.60px;top:609.98px;font-size:13.5px;line-height:13.5px;color:#0086c9;letter-spacing:0.404px;">pdc-mongodb-1</div>
<div class="a" style="left:247px;top:605.91px;width:65px;height:22px;background:#12b76a;border-radius:6px;"></div>
<div class="t " style="left:255.30px;top:610.70px;font-size:13px;line-height:13px;color:#fff;font-weight:700;letter-spacing:0.044px;">running</div>
<svg class="a" style="left:378px;top:607.41px;" width="11" height="14" viewBox="0 0 11 14" fill="none" stroke="#0086c9" stroke-width="1.15" stroke-linecap="round" stroke-linejoin="round"><path d="M2.2 1.2H6.6L10 4.6V11.4a1 1 0 0 1-1 1H2.2a1 1 0 0 1-1-1V2.2a1 1 0 0 1 1-1z"/><path d="M6.6 1.2v3.4H10"/><path d="M3.3 5h1.2M3.3 7.5h4.5M3.3 9.9h4.5"/></svg>
<svg class="a" style="left:394px;top:607.41px;" width="13" height="13" viewBox="0 0 24 24" fill="none" stroke="#0086c9" stroke-width="2.3" stroke-linecap="round" stroke-linejoin="round"><circle cx="12" cy="12" r="10"/><path d="M12 16v-4M12 8h.01"/></svg>
<svg class="a" style="left:413px;top:609.51px;" width="9" height="10" viewBox="0 0 9 10" fill="none" stroke="#0086c9" stroke-width="1.3" stroke-linecap="round" stroke-linejoin="round"><path d="M1.2 9v-2.2M4.5 9V3.8M7.8 9V0.8"/></svg>
<svg class="a" style="left:429px;top:609.41px;" width="11" height="9" viewBox="0 0 11 9" fill="none" stroke="#0086c9" stroke-width="1.3" stroke-linecap="round" stroke-linejoin="round"><path d="M0.8 0.8l3.8 3.5-3.8 3.5M5.8 8.4h4.4"/></svg>
<svg class="a" style="left:444.5px;top:607.41px;" width="13" height="13" viewBox="0 0 24 24" fill="none" stroke="#0086c9" stroke-width="2.3" stroke-linecap="round" stroke-linejoin="round"><path d="M21.44 11.05l-9.19 9.19a6 6 0 0 1-8.49-8.49l9.19-9.19a4 4 0 0 1 5.66 5.66l-9.2 9.19a2 2 0 0 1-2.83-2.83l8.49-8.48"/></svg>
<div class="t " style="left:484.90px;top:609.98px;font-size:13.5px;line-height:13.5px;color:#344054;letter-spacing:0.192px;">pdc</div>
<div class="a" style="left:565px;top:616.91px;width:8px;height:2px;background:#8a94a6;"></div>
<div class="t " style="left:580.50px;top:610.40px;font-size:13px;line-height:13px;color:#0086c9;letter-spacing:0.403px;">hitachi.jfrog.io/docker/pentaho/pdc-mongodb-ee:5.0.21-1.0.1</div>
<div class="t " style="left:1026.50px;top:600.48px;font-size:13.5px;line-height:13.5px;color:#344054;letter-spacing:0.295px;">2024-01-18</div>
<div class="t " style="left:1025.50px;top:619.48px;font-size:13.5px;line-height:13.5px;color:#344054;letter-spacing:0.280px;">10:49:32</div>
<div class="t " style="left:1159.00px;top:609.98px;font-size:13.5px;line-height:13.5px;color:#344054;letter-spacing:-0.033px;">172.20.0.4</div>
<div class="t " style="left:1271.40px;top:609.98px;font-size:13.5px;line-height:13.5px;color:#344054;">-</div>
<svg class="a" style="left:1414px;top:609.91px;" width="12.3" height="12.3" viewBox="0 0 24 24" fill="none" stroke="#344054" stroke-width="2" stroke-linecap="round" stroke-linejoin="round"><path d="M9.88 9.88a3 3 0 1 0 4.24 4.24"/><path d="M10.73 5.08A10.43 10.43 0 0 1 12 5c7 0 10 7 10 7a13.16 13.16 0 0 1-1.67 2.68"/><path d="M6.61 6.61A13.53 13.53 0 0 0 2 12s3 7 10 7a9.74 9.74 0 0 0 5.39-1.61"/><path d="M2 2l20 20"/></svg>
<div class="t " style="left:1435.70px;top:600.48px;font-size:13.5px;line-height:13.5px;color:#344054;letter-spacing:0.189px;">administrator</div>
<div class="t " style="left:1435.70px;top:619.48px;font-size:13.5px;line-height:13.5px;color:#344054;">s</div>
<div class="a" style="left:13px;top:643px;width:1518px;height:1px;background:#dcdcdc;"></div>
<div class="a" style="left:33px;top:663.04px;width:16px;height:16px;border:1px solid #d0d5dd;border-radius:4px;background:#fff;"></div>
<div class="t " style="left:71.60px;top:664.11px;font-size:13.5px;line-height:13.5px;color:#0086c9;letter-spacing:0.441px;">pdc-mongodb-init-1</div>
<div class="a" style="left:247px;top:660.04px;width:55px;height:22px;background:#f97066;border-radius:6px;"></div>
<div class="t " style="left:255.30px;top:664.83px;font-size:13px;line-height:13px;color:#fff;font-weight:700;letter-spacing:0.314px;">exited</div>
<svg class="a" style="left:378px;top:661.54px;" width="11" height="14" viewBox="0 0 11 14" fill="none" stroke="#0086c9" stroke-width="1.15" stroke-linecap="round" stroke-linejoin="round"><path d="M2.2 1.2H6.6L10 4.6V11.4a1 1 0 0 1-1 1H2.2a1 1 0 0 1-1-1V2.2a1 1 0 0 1 1-1z"/><path d="M6.6 1.2v3.4H10"/><path d="M3.3 5h1.2M3.3 7.5h4.5M3.3 9.9h4.5"/></svg>
<svg class="a" style="left:394px;top:661.54px;" width="13" height="13" viewBox="0 0 24 24" fill="none" stroke="#0086c9" stroke-width="2.3" stroke-linecap="round" stroke-linejoin="round"><circle cx="12" cy="12" r="10"/><path d="M12 16v-4M12 8h.01"/></svg>
<div class="t " style="left:484.90px;top:664.11px;font-size:13.5px;line-height:13.5px;color:#344054;letter-spacing:0.192px;">pdc</div>
<div class="a" style="left:565px;top:671.04px;width:8px;height:2px;background:#8a94a6;"></div>
<div class="t " style="left:580.50px;top:664.53px;font-size:13px;line-height:13px;color:#0086c9;letter-spacing:0.403px;">hitachi.jfrog.io/docker/pentaho/pdc-mongodb-ee:5.0.21-1.0.1</div>
<div class="t " style="left:1026.50px;top:654.61px;font-size:13.5px;line-height:13.5px;color:#344054;letter-spacing:0.295px;">2024-01-18</div>
<div class="t " style="left:1025.50px;top:673.61px;font-size:13.5px;line-height:13.5px;color:#344054;letter-spacing:0.280px;">10:49:32</div>
<div class="t " style="left:1160.00px;top:664.11px;font-size:13.5px;line-height:13.5px;color:#344054;">-</div>
<div class="t " style="left:1271.40px;top:664.11px;font-size:13.5px;line-height:13.5px;color:#344054;">-</div>
<svg class="a" style="left:1414px;top:664.04px;" width="12.3" height="12.3" viewBox="0 0 24 24" fill="none" stroke="#344054" stroke-width="2" stroke-linecap="round" stroke-linejoin="round"><path d="M9.88 9.88a3 3 0 1 0 4.24 4.24"/><path d="M10.73 5.08A10.43 10.43 0 0 1 12 5c7 0 10 7 10 7a13.16 13.16 0 0 1-1.67 2.68"/><path d="M6.61 6.61A13.53 13.53 0 0 0 2 12s3 7 10 7a9.74 9.74 0 0 0 5.39-1.61"/><path d="M2 2l20 20"/></svg>
<div class="t " style="left:1435.70px;top:654.61px;font-size:13.5px;line-height:13.5px;color:#344054;letter-spacing:0.189px;">administrator</div>
<div class="t " style="left:1435.70px;top:673.61px;font-size:13.5px;line-height:13.5px;color:#344054;">s</div>
<div class="a" style="left:13px;top:697px;width:1518px;height:1px;background:#dcdcdc;"></div>
<div class="a" style="left:33px;top:717.17px;width:16px;height:16px;border:1px solid #d0d5dd;border-radius:4px;background:#fff;"></div>
<div class="t " style="left:71.60px;top:708.74px;font-size:13.5px;line-height:13.5px;color:#0086c9;letter-spacing:0.549px;">pdc-mongodb-</div>
<div class="t " style="left:71.60px;top:727.74px;font-size:13.5px;line-height:13.5px;color:#0086c9;letter-spacing:0.139px;">migrations-1</div>
<div class="a" style="left:247px;top:714.17px;width:55px;height:22px;background:#f97066;border-radius:6px;"></div>
<div class="t " style="left:255.30px;top:718.96px;font-size:13px;line-height:13px;color:#fff;font-weight:700;letter-spacing:0.314px;">exited</div>
<svg class="a" style="left:378px;top:715.67px;" width="11" height="14" viewBox="0 0 11 14" fill="none" stroke="#0086c9" stroke-width="1.15" stroke-linecap="round" stroke-linejoin="round"><path d="M2.2 1.2H6.6L10 4.6V11.4a1 1 0 0 1-1 1H2.2a1 1 0 0 1-1-1V2.2a1 1 0 0 1 1-1z"/><path d="M6.6 1.2v3.4H10"/><path d="M3.3 5h1.2M3.3 7.5h4.5M3.3 9.9h4.5"/></svg>
<svg class="a" style="left:394px;top:715.67px;" width="13" height="13" viewBox="0 0 24 24" fill="none" stroke="#0086c9" stroke-width="2.3" stroke-linecap="round" stroke-linejoin="round"><circle cx="12" cy="12" r="10"/><path d="M12 16v-4M12 8h.01"/></svg>
<div class="t " style="left:484.90px;top:718.24px;font-size:13.5px;line-height:13.5px;color:#344054;letter-spacing:0.192px;">pdc</div>
<div class="a" style="left:565px;top:715.67px;width:8px;height:2px;background:#8a94a6;"></div>
<div class="t " style="left:580.50px;top:709.16px;font-size:13px;line-height:13px;color:#0086c9;letter-spacing:0.537px;">hitachi.jfrog.io/docker/pentaho/pdc-mongodb-migrations:231213-</div>
<div class="t " style="left:562.30px;top:728.16px;font-size:13px;line-height:13px;color:#0086c9;letter-spacing:0.367px;">9d91f7a-release-v10.0</div>
<div class="t " style="left:1026.50px;top:708.74px;font-size:13.5px;line-height:13.5px;color:#344054;letter-spacing:0.295px;">2024-01-18</div>
<div class="t " style="left:1025.50px;top:727.74px;font-size:13.5px;line-height:13.5px;color:#344054;letter-spacing:0.280px;">10:49:32</div>
<div class="t " style="left:1160.00px;top:718.24px;font-size:13.5px;line-height:13.5px;color:#344054;">-</div>
<div class="t " style="left:1271.40px;top:718.24px;font-size:13.5px;line-height:13.5px;color:#344054;">-</div>
<svg class="a" style="left:1414px;top:718.17px;" width="12.3" height="12.3" viewBox="0 0 24 24" fill="none" stroke="#344054" stroke-width="2" stroke-linecap="round" stroke-linejoin="round"><path d="M9.88 9.88a3 3 0 1 0 4.24 4.24"/><path d="M10.73 5.08A10.43 10.43 0 0 1 12 5c7 0 10 7 10 7a13.16 13.16 0 0 1-1.67 2.68"/><path d="M6.61 6.61A13.53 13.53 0 0 0 2 12s3 7 10 7a9.74 9.74 0 0 0 5.39-1.61"/><path d="M2 2l20 20"/></svg>
<div class="t " style="left:1435.70px;top:708.74px;font-size:13.5px;line-height:13.5px;color:#344054;letter-spacing:0.189px;">administrator</div>
<div class="t " style="left:1435.70px;top:727.74px;font-size:13.5px;line-height:13.5px;color:#344054;">s</div>
<div class="a" style="left:13px;top:751px;width:1518px;height:1px;background:#efefef;"></div>
<div class="t " style="left:1164.20px;top:772.99px;font-size:13px;line-height:13px;color:#667085;letter-spacing:-0.083px;">Items per page</div>
<div class="a" style="left:1255px;top:762px;width:71px;height:34px;background:#f9fafb;border:1px solid #c9cdd3;border-radius:6px;"></div>
<div class="t " style="left:1271.00px;top:772.09px;font-size:15.6px;line-height:15.6px;color:#344054;letter-spacing:-2.073px;">10</div>
<svg class="a" style="left:1311.5px;top:775px;" width="11" height="8" viewBox="0 0 24 20" fill="none" stroke="#101828" stroke-width="3.5" stroke-linecap="round" stroke-linejoin="round"><path d="M3 6l9 9 9-9"/></svg>
<div class="t " style="left:1339.30px;top:772.30px;font-size:15px;line-height:15px;color:#344054;">‹</div>
<div class="t " style="left:1367.80px;top:772.09px;font-size:15.6px;line-height:15.6px;color:#344054;">1</div>
<div class="a" style="left:1389px;top:764px;width:32px;height:32px;background:#e0f2fe;border-radius:6px;"></div>
<div class="t " style="left:1400.70px;top:772.09px;font-size:15.6px;line-height:15.6px;color:#344054;">2</div>
<div class="t " style="left:1434.00px;top:772.09px;font-size:15.6px;line-height:15.6px;color:#344054;">3</div>
<div class="t " style="left:1467.80px;top:772.09px;font-size:15.6px;line-height:15.6px;color:#344054;">4</div>
<div class="t " style="left:1502.70px;top:772.30px;font-size:15px;line-height:15px;color:#344054;">›</div>
<div class="a" style="left:12px;top:210px;width:1522px;height:55px;border:3px solid #ff3a3a;filter:drop-shadow(0 4px 2.5px rgba(0,0,0,0.6));"></div>
<div class="a" style="left:12px;top:317px;width:1522px;height:59px;border:3px solid #ff3a3a;filter:drop-shadow(0 4px 2.5px rgba(0,0,0,0.6));"></div>
<div class="a" style="left:11px;top:481px;width:1523px;height:56px;border:3px solid #ff3a3a;filter:drop-shadow(0 4px 2.5px rgba(0,0,0,0.6));"></div>
<div class="a" style="left:12px;top:537px;width:1522px;height:55px;border:3px solid #ff3a3a;filter:drop-shadow(0 4px 2.5px rgba(0,0,0,0.6));"></div>
<div class="t " style="left:808.10px;top:232.58px;font-size:16.8px;line-height:16.8px;color:#ff3a3a;font-weight:700;letter-spacing:-0.293px;">Proxy Server</div>
<div class="t " style="left:810.00px;top:338.38px;font-size:16.8px;line-height:16.8px;color:#ff3a3a;font-weight:700;letter-spacing:-0.118px;">Data Collector</div>
<div class="t " style="left:810.60px;top:501.78px;font-size:16.8px;line-height:16.8px;color:#ff3a3a;font-weight:700;letter-spacing:0.209px;">Infrastructure Monitoring</div>
<div class="t " style="left:823.00px;top:557.58px;font-size:16.8px;line-height:16.8px;color:#ff3a3a;font-weight:700;letter-spacing:-0.077px;">Observability Framework</div>
</body></html>
